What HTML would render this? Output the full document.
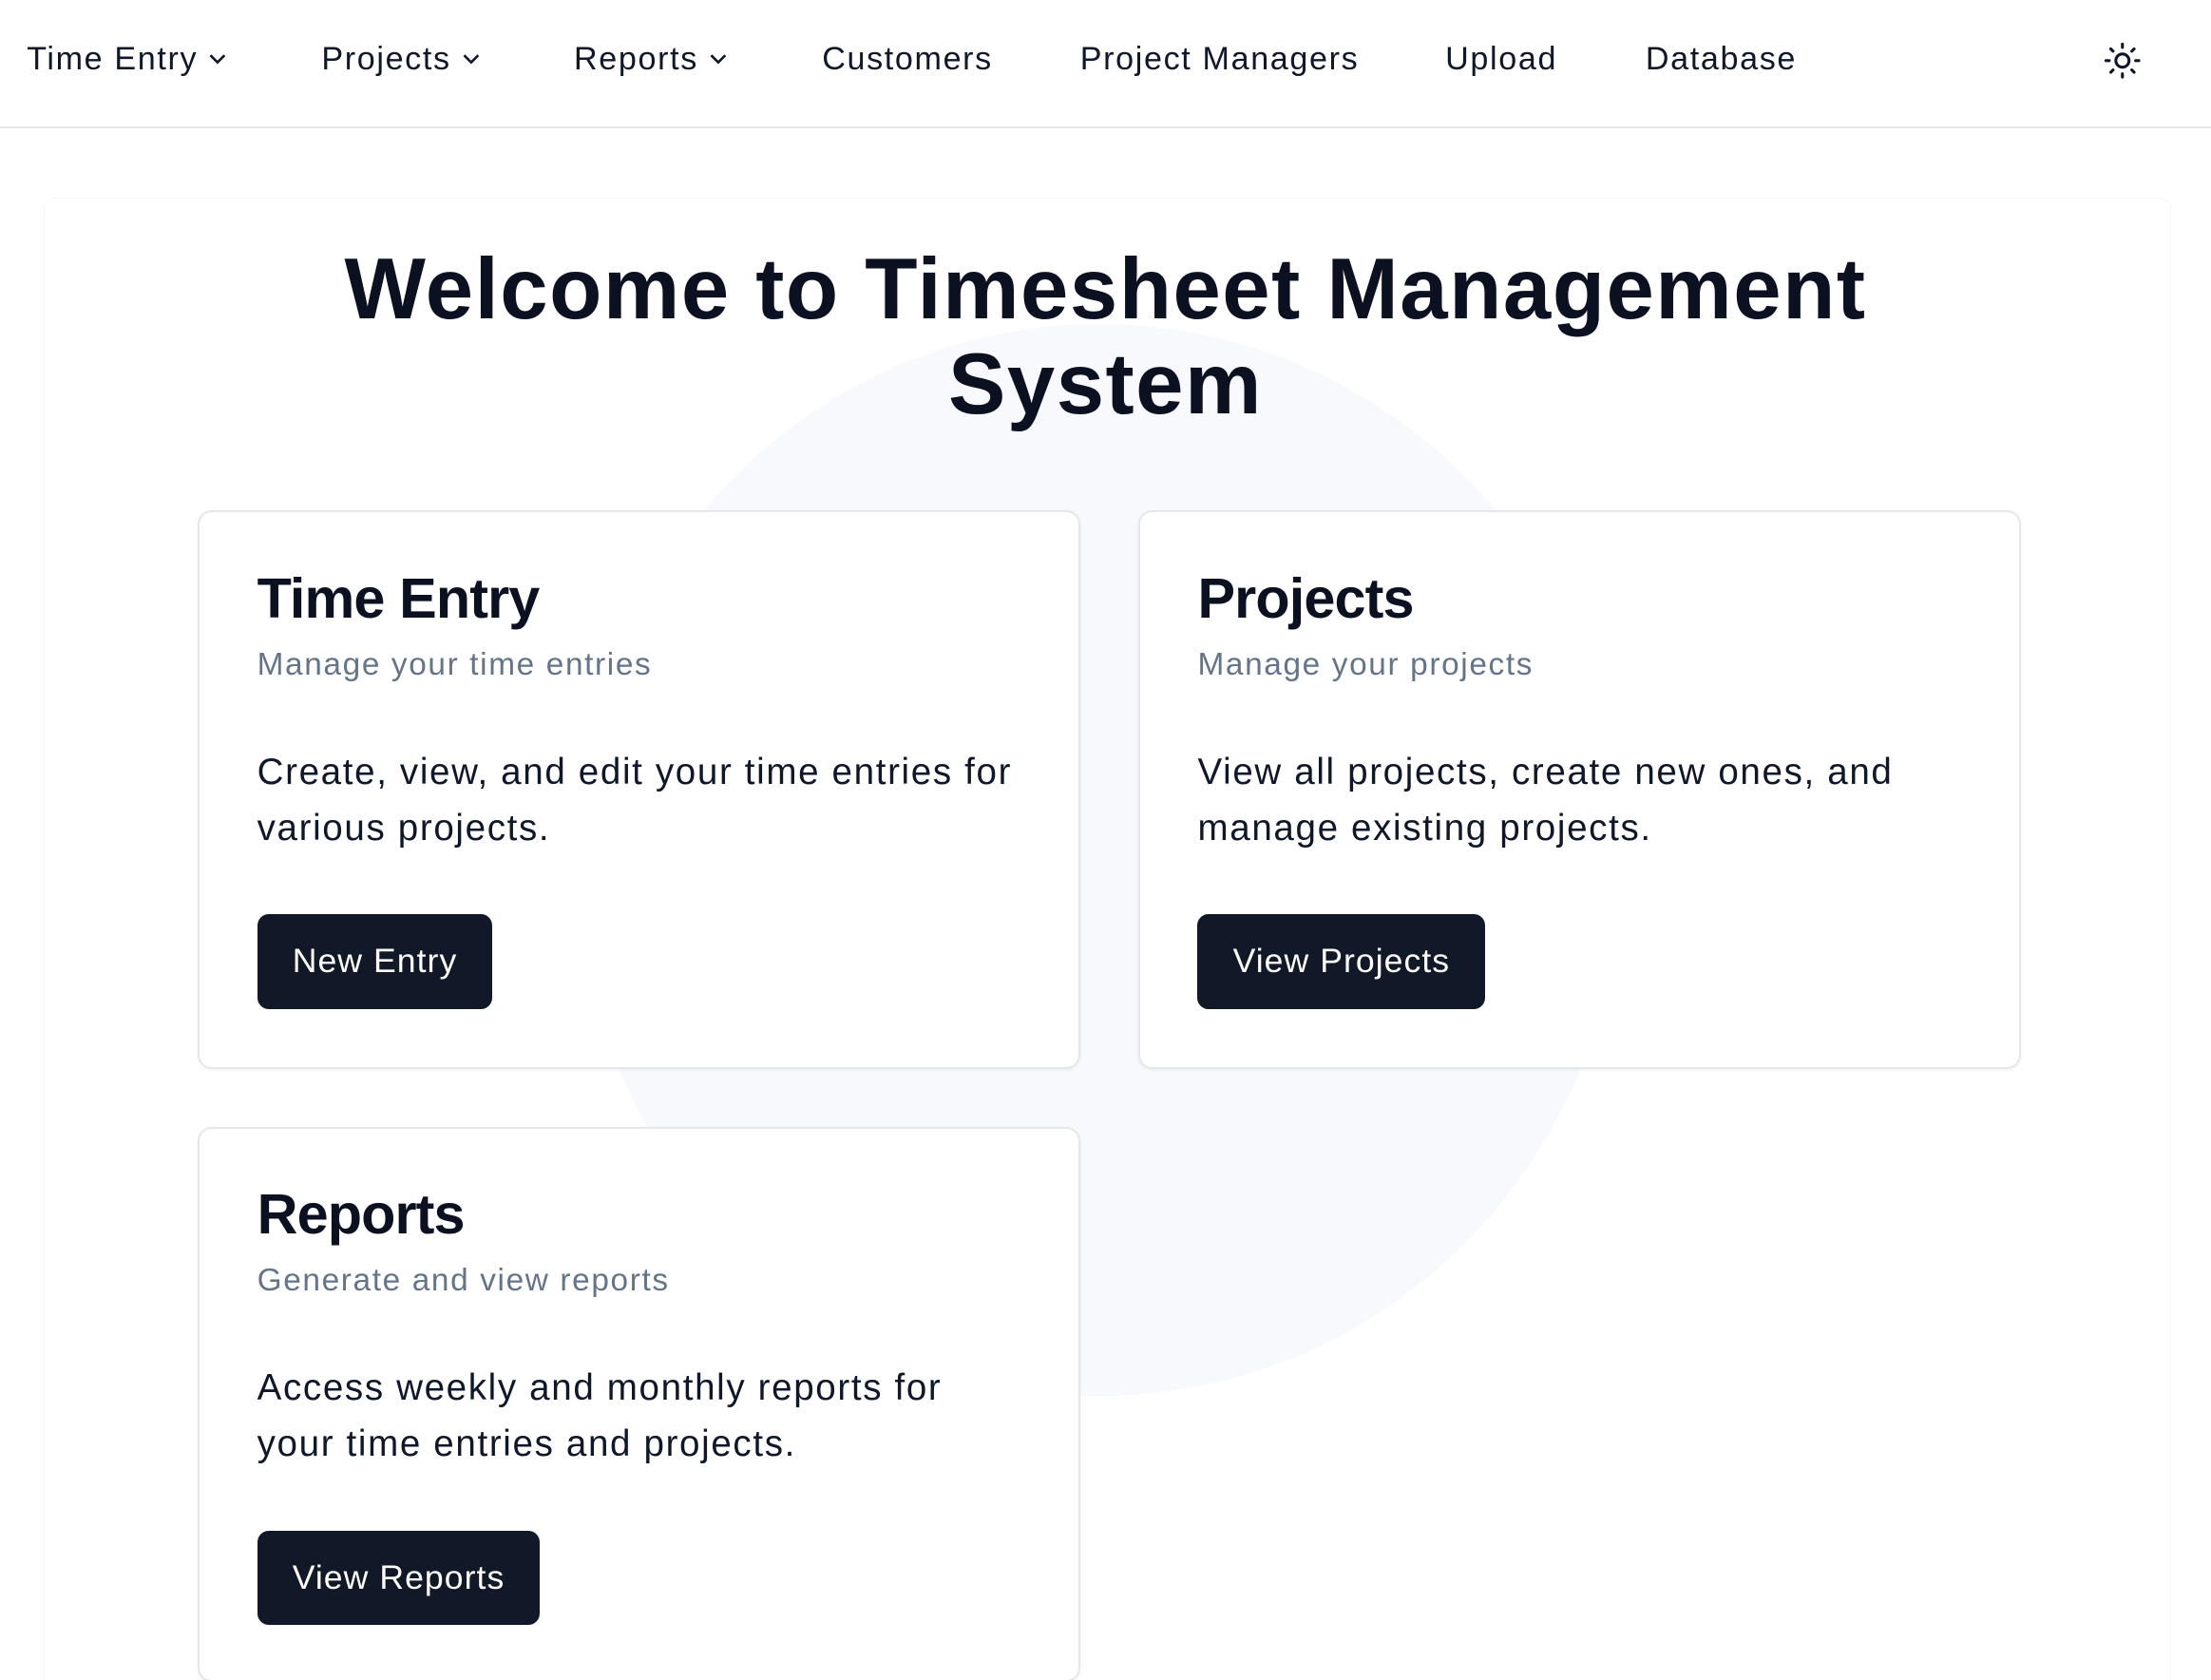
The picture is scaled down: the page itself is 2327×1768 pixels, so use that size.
<!DOCTYPE html>
<html><head><meta charset="utf-8"><style>
html{zoom:1.48406;height:1191px;overflow:hidden}
*{box-sizing:border-box;margin:0;padding:0}
body{width:1568px;height:1191px;overflow:hidden;background:#fff;font-family:"Liberation Sans",sans-serif;color:#0f172a;position:relative}
nav{height:91px;border-bottom:1.5px solid #e5e7eb;position:relative}
nav span{position:absolute;top:29px;font-size:23px;color:#0f172a;white-space:nowrap;letter-spacing:1.1px}
nav svg.ch{display:inline-block;vertical-align:middle;margin-left:8px;margin-top:-3px}
.sun{position:absolute;left:1491px;top:29px}
.wrap{position:absolute;left:31px;top:140px;width:1509px;height:1100px;border:1px solid #f6f7f9;border-radius:8px}
.deco{position:absolute;left:410px;top:230px;width:740px;height:760px;border-radius:50%;background:#f7f9fc}
h1{position:absolute;left:0;width:1568px;top:172px;text-align:center;font-size:61px;line-height:67px;font-weight:700;letter-spacing:1px;color:#0b1120}
.card{position:absolute;width:626px;background:#fff;border:1.5px solid #e5e7eb;border-radius:10px;box-shadow:0 1px 3px rgba(0,0,0,.05);padding:0 41px}
.card h2{font-size:40px;font-weight:700;letter-spacing:-0.6px;margin-top:38px;line-height:46px;color:#0b1120}
.card .sub{font-size:22.5px;color:#64748b;margin-top:10px;line-height:28px;letter-spacing:1.1px}
.card p{font-size:26px;line-height:40px;margin-top:42px;color:#0f172a;letter-spacing:1.1px}
.card .btn{display:inline-block;margin-top:41px;height:67px;line-height:67px;padding:0 25px;background:#111827;color:#fff;border-radius:8px;font-size:24px;letter-spacing:0.7px}
</style></head><body>
<nav>
<span style="left:19px">Time Entry<svg class="ch" width="12" height="8" viewBox="0 0 12 8"><path d="M1 1.5l5 5 5-5" fill="none" stroke="#0f172a" stroke-width="1.8"/></svg></span>
<span style="left:228px">Projects<svg class="ch" width="12" height="8" viewBox="0 0 12 8"><path d="M1 1.5l5 5 5-5" fill="none" stroke="#0f172a" stroke-width="1.8"/></svg></span>
<span style="left:407px">Reports<svg class="ch" width="12" height="8" viewBox="0 0 12 8"><path d="M1 1.5l5 5 5-5" fill="none" stroke="#0f172a" stroke-width="1.8"/></svg></span>
<span style="left:583px">Customers</span>
<span style="left:766px">Project Managers</span>
<span style="left:1025px">Upload</span>
<span style="left:1167px">Database</span>
<svg class="sun" width="28" height="28" viewBox="0 0 24 24" fill="none" stroke="#0f172a" stroke-width="1.8" stroke-linecap="round"><circle cx="12" cy="12" r="4"/><path d="M12 2v2M12 20v2M4.9 4.9l1.4 1.4M17.7 17.7l1.4 1.4M2 12h2M20 12h2M6.3 17.7l-1.4 1.4M19.1 4.9l-1.4 1.4"/></svg>
</nav>
<div class="wrap"></div>
<div class="deco"></div>
<h1>Welcome to Timesheet Management<br>System</h1>
<div class="card" style="left:140px;top:362px;height:396px">
<h2>Time Entry</h2><div class="sub">Manage your time entries</div>
<p>Create, view, and edit your time entries for various projects.</p>
<span class="btn">New Entry</span></div>
<div class="card" style="left:807px;top:362px;height:396px">
<h2>Projects</h2><div class="sub">Manage your projects</div>
<p>View all projects, create new ones, and manage existing projects.</p>
<span class="btn">View Projects</span></div>
<div class="card" style="left:140px;top:799px;height:394px">
<h2>Reports</h2><div class="sub">Generate and view reports</div>
<p>Access weekly and monthly reports for your time entries and projects.</p>
<span class="btn">View Reports</span></div>
</body></html>
